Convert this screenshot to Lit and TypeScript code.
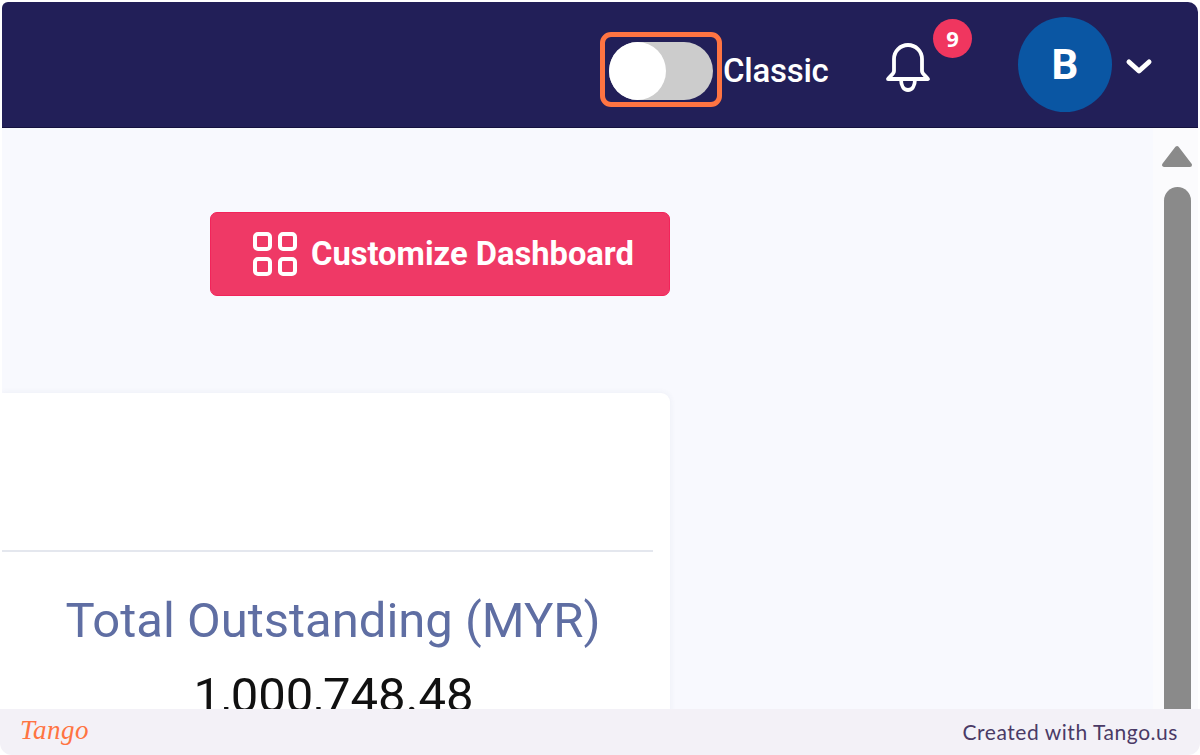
import { LitElement, html, css } from "lit";
import { customElement } from "lit/decorators.js";

@customElement("app-root")
export class AppRoot extends LitElement {
  static styles = css`
    :host { display: block; width: 1200px; height: 755px; background: #fff; overflow: hidden; }
    .frame { height: 755px; display: flex; flex-direction: column; box-sizing: border-box; padding: 2px 2px 0 2px; }
    .header { flex: none; height: 126px; background: #221f58; border-bottom: 1px solid #15123f; box-sizing: border-box; border-top-right-radius: 10px; border-top-left-radius: 6px; display: flex; align-items: center; padding: 0 45px 0 598px; font-family: Roboto, "Liberation Sans", sans-serif; color: #fff; }
    .toggle-wrap { position: relative; width: 104px; height: 58px; margin: 12px 0 0 9px; flex: none; }
    .track { width: 104px; height: 58px; border-radius: 29px; background: #cccccc; display: flex; }
    .knob { width: 57px; height: 58px; border-radius: 50%; background: #fff; }
    .highlight { position: absolute; left: -9px; top: -10px; width: 122px; height: 75px; box-sizing: border-box; border: 5px solid #ff7442; border-radius: 11px; }
    .label { margin: 18px 0 0 10px; line-height: 36px; width: 161px; flex: none; }
    .label-text { font-size: 33px; font-weight: 500; display: inline-block; letter-spacing: -0.25px; }
    .bell-wrap { position: relative; width: 48px; height: 60px; flex: none; }
    .bell { display: block; width: 48px; height: 54px; margin-top: 6px; }
    .badge { position: absolute; left: 49px; top: -16px; width: 39px; height: 39px; border-radius: 50%; background: #f0365f; color: #fff; font-size: 22px; font-weight: 700; display: flex; align-items: center; justify-content: center; font-family: "Noto Sans", sans-serif; }
    .avatar { width: 94px; height: 95px; border-radius: 50%; background: #0a56a3; margin-left: 86px; display: flex; align-items: center; justify-content: center; font-size: 42px; font-weight: 700; flex: none; font-family: Roboto, "Noto Sans", sans-serif; }
    .chev { width: 28px; height: 20px; margin: 2px 0 0 13px; flex: none; }
    .main { flex: 1; min-height: 0; background: #f8f9fe; display: flex; overflow: hidden; }
    .content { width: 668px; flex: none; display: flex; flex-direction: column; align-items: flex-end; padding-top: 84px; }
    .btn { flex: none; width: 460px; height: 84px; box-sizing: border-box; background: #ef3966; border: 1px solid #f2245a; border-radius: 7px; display: flex; align-items: center; padding-left: 42px; gap: 14px; color: #fff; font-family: Roboto, "Liberation Sans", sans-serif; font-size: 32.7px; font-weight: 700; white-space: nowrap; }
    .btn svg { flex: none; }
    .card { flex: none; margin-top: 97px; width: 668px; height: 400px; background: #fff; border-radius: 0 9px 0 0; box-shadow: 0 0 6px rgba(60,70,120,.07); font-family: Roboto, "Liberation Sans", sans-serif; text-align: center; }
    .card-head { height: 157px; margin-right: 17px; border-bottom: 2px solid #e4e7ee; }
    .card-title { margin-top: 39px; font-size: 49px; line-height: 60px; color: #5f6ea3; padding-right: 6px; }
    .card-value { margin-top: 17px; font-size: 49px; line-height: 56px; color: #111; padding-right: 5px; }
    .spacer { flex: 1; }
    .scrollbar { width: 45px; flex: none; background: #fbfbfd; display: flex; flex-direction: column; align-items: center; padding: 17px 0 0 3px; box-sizing: border-box; }
    .arrow { display: block; flex: none; }
    .thumb { width: 27px; flex: 1; margin-top: 19px; background: #8a8a8a; border-radius: 14px 14px 0 0; }
    .footer { flex: none; height: 46px; margin: 0 -2px; background: #f3f1f7; border-radius: 0 0 12px 12px; display: flex; align-items: center; justify-content: space-between; padding: 0 22px 0 20px; }
    .logo { font-family: "Liberation Serif", serif; font-style: italic; font-size: 27px; color: #ff7442; font-weight: 400; letter-spacing: 0.5px; margin-bottom: 3px; }
    .credit { font-family: Lato, "Open Sans", sans-serif; font-size: 21px; color: #4a3a66; letter-spacing: 0.55px; margin-bottom: 2px; }
  `;

  render() {
    return html`<div class="frame">
      <div class="header">
        <div class="toggle-wrap">
          <div class="track"><div class="knob"></div></div>
          <div class="highlight"></div>
        </div>
        <div class="label"><span class="label-text">Classic</span></div>
        <div class="bell-wrap">
          <svg class="bell" viewBox="0 0 48 54" fill="none" stroke="#fff" stroke-width="3.8" stroke-linecap="round" stroke-linejoin="round">
            <path d="M10 30V18a14 14 0 0 1 28 0v12c0 3 4 5 6 8H4c2-3 6-5 6-8z"/>
            <path d="M17 38c0 7 3 11 7 11s7-4 7-11"/>
          </svg>
          <div class="badge">9</div>
        </div>
        <div class="avatar">B</div>
        <svg class="chev" viewBox="0 0 28 20" fill="none" stroke="#fff" stroke-width="5" stroke-linecap="round" stroke-linejoin="round"><path d="M4 6l10 9 10-9"/></svg>
      </div>
      <div class="main">
        <div class="content">
          <div class="btn">
            <svg width="44" height="44" viewBox="0 0 44 44" fill="none" stroke="#fff" stroke-width="4">
              <rect x="2" y="2" width="15" height="15" rx="3"/><rect x="27" y="2" width="15" height="15" rx="3"/>
              <rect x="2" y="27" width="15" height="15" rx="3"/><rect x="27" y="27" width="15" height="15" rx="3"/>
            </svg>
            <span>Customize Dashboard</span>
          </div>
          <div class="card">
            <div class="card-head"></div>
            <div class="card-title">Total Outstanding (MYR)</div>
            <div class="card-value">1,000,748.48</div>
          </div>
        </div>
        <div class="spacer"></div>
        <div class="scrollbar">
          <svg class="arrow" width="32" height="23" viewBox="0 0 32 23" fill="#8a8a8a" stroke="#8a8a8a" stroke-width="4" stroke-linejoin="round"><path d="M16 3L3 20h26z"/></svg>
          <div class="thumb"></div>
        </div>
      </div>
      <div class="footer"><span class="logo">Tango</span><span class="credit">Created with Tango.us</span></div>
    </div>`;
  }
}
